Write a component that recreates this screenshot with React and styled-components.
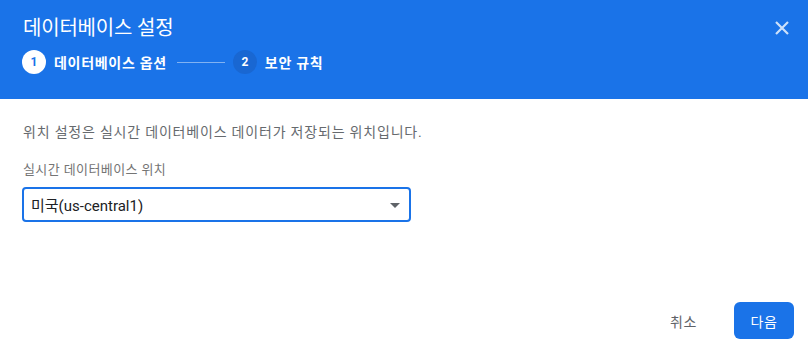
import React from "react";
import styled, { createGlobalStyle } from "styled-components";

const Global = createGlobalStyle`
  html, body { margin: 0; padding: 0; background: #fff; }
  body { font-family: Roboto, "Noto Sans CJK KR", sans-serif; }
  * { box-sizing: border-box; }
`;

const Dialog = styled.div`
  width: 808px;
  height: 353px;
  display: flex;
  flex-direction: column;
  background: #fff;
`;

const Header = styled.header`
  height: 99px;
  background: #1a73e8;
  color: #fff;
  padding: 12px 14px 0 22px;
  display: flex;
  flex-direction: column;
`;

const TitleRow = styled.div`
  display: flex;
  align-items: center;
  justify-content: space-between;
  height: 28px;
`;

const Title = styled.h1`
  margin: 0;
  font-size: 20px;
  font-weight: 400;
  letter-spacing: -0.2px;
  padding-left: 1px;
`;

const Close = styled.button`
  border: 0;
  background: transparent;
  padding: 0;
  width: 24px;
  height: 24px;
  display: flex;
  align-items: center;
  justify-content: center;
  cursor: pointer;
  color: rgba(255, 255, 255, 0.78);
  margin-top: 3px;
`;

const Steps = styled.div`
  display: flex;
  align-items: center;
  margin-top: 10px;
  height: 24px;
`;

const StepCircle = styled.span`
  width: 24px;
  height: 24px;
  border-radius: 50%;
  display: flex;
  align-items: center;
  justify-content: center;
  font-family: Roboto, sans-serif;
  font-size: 12px;
  font-weight: 700;
  background: ${(p) => (p.$active ? "#fff" : "#1967d2")};
  color: ${(p) => (p.$active ? "#1a73e8" : "#fff")};
`;

const StepLabel = styled.span`
  font-size: 14px;
  font-weight: 700;
  letter-spacing: 0.7px;
  margin-left: ${(p) => p.$gap}px;
  color: #fff;
`;

const Connector = styled.span`
  width: 48px;
  height: 1px;
  background: rgba(255, 255, 255, 0.45);
  margin: 1px 8px 0 10px;
`;

const Body = styled.main`
  flex: 1;
  padding: 24px 22px 0 22px;
  display: flex;
  flex-direction: column;
`;

const Desc = styled.p`
  margin: 0;
  font-size: 14px;
  letter-spacing: 0.8px;
  color: #666a6e;
  line-height: 18px;
  padding-left: 1px;
`;

const FieldLabel = styled.label`
  margin-top: 20px;
  font-size: 13px;
  letter-spacing: 0.4px;
  color: #757575;
  line-height: 17px;
  padding-left: 1px;
`;

const Select = styled.div`
  margin-top: 9px;
  width: 389px;
  height: 35px;
  border: 2px solid #1a73e8;
  border-radius: 4px;
  display: flex;
  align-items: center;
  justify-content: space-between;
  padding: 0 9px 0 7px;
  font-size: 15px;
  color: #202124;
`;

const Caret = styled.span`
  width: 0;
  height: 0;
  border-left: 5px solid transparent;
  border-right: 5px solid transparent;
  border-top: 5px solid #5f6368;
  margin-top: 1px;
`;

const Footer = styled.footer`
  display: flex;
  justify-content: flex-end;
  align-items: center;
  gap: 21px;
  padding: 0 14px 14px 0;
`;

const TextButton = styled.button`
  border: 0;
  background: transparent;
  font-family: Roboto, "Noto Sans CJK KR", sans-serif;
  font-size: 14px;
  letter-spacing: 0.6px;
  color: #5f6368;
  height: 37px;
  padding: 0 16px;
  cursor: pointer;
`;

const PrimaryButton = styled.button`
  border: 0;
  background: #1a73e8;
  color: #fff;
  font-family: Roboto, "Noto Sans CJK KR", sans-serif;
  font-size: 14px;
  letter-spacing: 0.6px;
  height: 37px;
  width: 60px;
  border-radius: 6px;
  cursor: pointer;
`;

export default function App() {
  return (
    <>
      <Global />
      <Dialog>
        <Header>
          <TitleRow>
            <Title>데이터베이스 설정</Title>
            <Close aria-label="닫기">
              <svg width="14" height="14" viewBox="0 0 14 14">
                <path d="M1 1 L13 13 M13 1 L1 13" stroke="currentColor" strokeWidth="2.2" />
              </svg>
            </Close>
          </TitleRow>
          <Steps>
            <StepCircle $active>1</StepCircle>
            <StepLabel $gap={8}>데이터베이스 옵션</StepLabel>
            <Connector />
            <StepCircle>2</StepCircle>
            <StepLabel $gap={8}>보안 규칙</StepLabel>
          </Steps>
        </Header>
        <Body>
          <Desc>위치 설정은 실시간 데이터베이스 데이터가 저장되는 위치입니다.</Desc>
          <FieldLabel>실시간 데이터베이스 위치</FieldLabel>
          <Select>
            <span>미국(us-central1)</span>
            <Caret />
          </Select>
        </Body>
        <Footer>
          <TextButton>취소</TextButton>
          <PrimaryButton>다음</PrimaryButton>
        </Footer>
      </Dialog>
    </>
  );
}
